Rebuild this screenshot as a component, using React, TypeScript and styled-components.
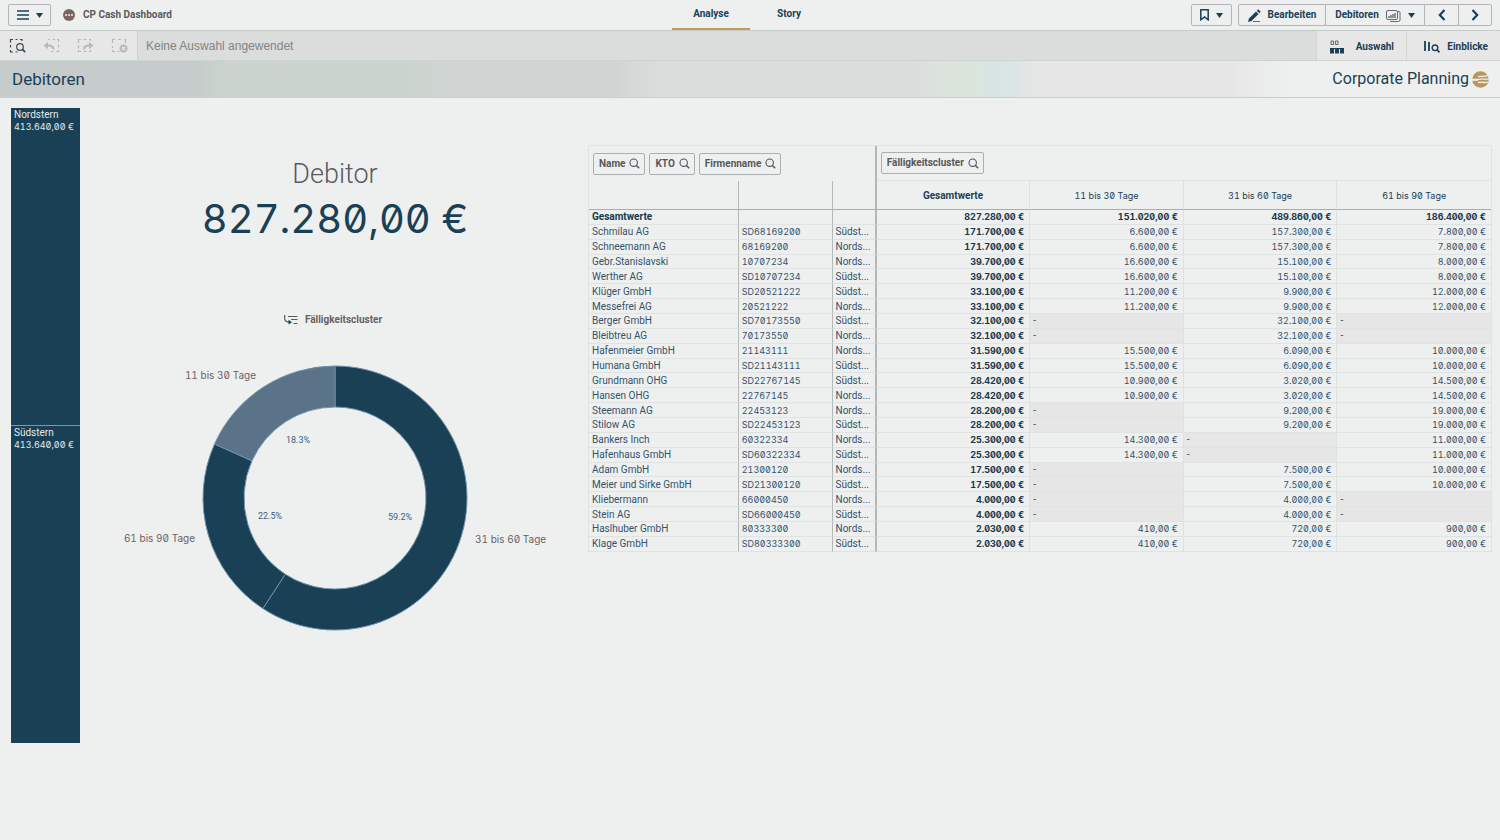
import React from "react";
import styled, { createGlobalStyle, css } from "styled-components";

const navy = "#1a4056";
const sans = `Roboto, "Liberation Sans", sans-serif`;
const figures = `Inter, Roboto, sans-serif`;

const tabular = css`
  font-family: ${figures};
  font-feature-settings: "zero" 1, "tnum" 1;
`;

const Global = createGlobalStyle`
  *, *::before, *::after { box-sizing: border-box; }
  body { margin: 0; background: #eef0ef; color: ${navy}; font-family: ${sans}; font-size: 10px; line-height: 14px; }
  button { font: inherit; color: inherit; background: none; border: 0; padding: 0; cursor: pointer; }
  h1, h2, p { margin: 0; font-weight: 400; }
`;

const Page = styled.div`
  min-height: 100vh;
`;

const TopBar = styled.header`
  display: grid;
  grid-template-columns: 1fr auto 1fr;
  height: 31px;
  padding: 0 8px;
  border-bottom: 1px solid #c3cccb;
`;

const Cluster = styled.div<{ $end?: boolean; $gap: number }>`
  display: flex;
  align-items: center;
  gap: ${(p) => p.$gap}px;
  justify-content: ${(p) => (p.$end ? "flex-end" : "flex-start")};
`;

const BarButton = styled.button<{ $width: number }>`
  display: flex;
  align-items: center;
  justify-content: center;
  gap: 7px;
  width: ${(p) => p.$width}px;
  height: 22px;
  border: 1px solid #b5b3b8;
  border-radius: 2px;
  font-weight: 700;
  white-space: nowrap;
`;

const ButtonGroup = styled.div`
  display: flex;
  ${BarButton} + ${BarButton} { margin-left: -1px; border-radius: 0 2px 2px 0; }
`;

const AppName = styled.div`
  display: flex;
  align-items: center;
  gap: 8px;
  font-weight: 700;
  color: #5b5a5b;
`;

const Tabs = styled.nav`
  display: flex;
`;

const Tab = styled.a<{ $active?: boolean }>`
  display: block;
  width: 78px;
  height: 30px;
  line-height: 28px;
  text-align: center;
  font-weight: 700;
  color: ${navy};
  text-decoration: none;
  border-bottom: 2px solid ${(p) => (p.$active ? "#c39a5b" : "transparent")};
`;

const SelectionBar = styled.div`
  display: flex;
  height: 29px;
  background: #e7e7e7;
`;

const SelectionTools = styled.div`
  display: flex;
  align-items: center;
  gap: 17px;
  width: 137px;
  padding-left: 9px;
`;

const ToolButton = styled.button`
  display: flex;
  color: #3b4a55;
  &:disabled { color: #b9b9b9; }
`;

const SelectionText = styled.p`
  flex: 1;
  padding-left: 8px;
  line-height: 30px;
  font-family: "Liberation Sans", sans-serif;
  font-size: 12px;
  color: #818385;
  background: #dbdddc;
  border-left: 1px solid #cfd2d1;
`;

const PanelButton = styled.button<{ $width: number; $gap: number }>`
  display: flex;
  align-items: center;
  justify-content: flex-end;
  gap: ${(p) => p.$gap}px;
  width: ${(p) => p.$width}px;
  padding: 2px 12px 0 0;
  font-weight: 700;
  border-left: 1px solid #d3d7d6;
`;

const TitleBar = styled.div`
  display: flex;
  align-items: center;
  justify-content: space-between;
  height: 38px;
  padding: 0 11px 0 12px;
  border-top: 1px solid #cdd3d1;
  border-bottom: 1px solid #c9cfce;
  background: linear-gradient(90deg, #c6cbcb 0 13%, #cad4cc 15% 27%, #d0d5d4 30% 41%, #dbdddc 44% 61%, #dce5dc 63% 65%, #d8e5e4 66% 67%, #e6e6e6 69% 82%, #eef0ef 86%);
`;

const SheetTitle = styled.h1`
  font-size: 17px;
  line-height: 24px;
`;

const Brand = styled.div`
  display: flex;
  align-items: center;
  gap: 3px;
  font-size: 16px;
  line-height: 24px;
`;

const Sheet = styled.main`
  display: grid;
  grid-template-columns: 69px minmax(0, 508fr) minmax(0, 904fr);
  align-items: start;
  padding: 10px 8px 0 11px;
`;

const TreeMap = styled.section`
  display: flex;
  flex-direction: column;
  gap: 1px;
  background: #7c98ad;
`;

const TreeCell = styled.div`
  height: 317px;
  padding: 1px 3px;
  background: ${navy};
  color: #e3e9ea;
  line-height: 12px;
`;

const Figure = styled.span`
  ${tabular}
  font-size: 9px;
`;

const Overview = styled.section`
  display: flex;
  flex-direction: column;
  align-items: center;
  padding: 50px 0 0 2px;
`;

const KpiLabel = styled.h2`
  font-size: 27px;
  line-height: 32px;
  font-weight: 300;
  color: #5b5a5e;
`;

const KpiValue = styled.p`
  ${tabular}
  font-size: 40px;
  font-weight: 400;
  line-height: 58px;
  white-space: nowrap;
`;

const Dimension = styled.button`
  display: flex;
  align-items: center;
  gap: 7px;
  margin-top: 65px;
  padding-right: 4px;
  font-weight: 700;
  color: #6b6063;
`;

const Donut = styled.svg`
  display: block;
  width: 440px;
  max-width: 100%;
  margin-top: 23px;
`;

const SliceNames = styled.g`
  ${tabular}
  font-size: 10px;
  fill: #6b5f63;
`;

const Shares = styled.g`
  font-size: 9px;
  fill: #3c6280;
  text-anchor: middle;
`;

const Pivot = styled.table`
  width: 100%;
  height: 407px;
  margin-top: 37px;
  table-layout: fixed;
  border-collapse: separate;
  border-spacing: 0;
  border: 1px solid #dfe4e1;
  border-bottom: 0;
`;

const FilterHead = styled.th<{ $rule?: boolean }>`
  height: 35px;
  padding: 0 4px;
  text-align: left;
  border-right: ${(p) => (p.$rule ? "2px solid #b4b8b9" : "0")};
  border-bottom: ${(p) => (p.$rule ? "0" : "1px solid #dbe2dd")};
`;

const Filters = styled.div`
  display: flex;
  gap: 4px;
`;

const FilterButton = styled.button`
  display: flex;
  align-items: center;
  gap: 4px;
  height: 22px;
  padding: 0 4px 0 5px;
  border: 1px solid #a9b0b1;
  border-radius: 2px;
  font-weight: 700;
  color: #565759;
`;

type Edge = "rule" | "strong" | "soft" | "none";
const edges: Record<Edge, string> = {
  rule: "1px solid #b4b8b9",
  strong: "2px solid #b4b8b9",
  soft: "1px solid #dde1df",
  none: "0",
};

const ColumnHead = styled.th<{ $edge: Edge; $bold?: boolean }>`
  height: 29px;
  padding: 2px 0 0;
  font-weight: ${(p) => (p.$bold ? 700 : 400)};
  border-right: ${(p) => edges[p.$edge]};
  border-bottom: 1px solid #a9adae;
`;

const Cell = styled.td<{ $edge: Edge; $bold?: boolean; $num?: boolean; $empty?: boolean }>`
  padding: 0 ${(p) => (p.$num && !p.$empty ? 5 : 2)}px 0 3px;
  line-height: 13px;
  text-align: ${(p) => (p.$num && !p.$empty ? "right" : "left")};
  font-weight: ${(p) => (p.$bold ? 700 : 400)};
  color: ${(p) => (p.$bold ? "#17374b" : "#34526a")};
  background: ${(p) => (p.$empty ? "#e6e6e6" : "transparent")};
  border-right: ${(p) => edges[p.$edge]};
  border-bottom: 1px solid #dfe3e1;
  overflow: hidden;
  white-space: nowrap;
  text-overflow: ellipsis;
`;

const Caret = () => (
  <svg width="7" height="5" viewBox="0 0 7 5" fill={navy}><path d="M0 0h7L3.500 5z" /></svg>
);

const Lens = () => (
  <svg width="11" height="11" viewBox="0 0 11 11" fill="none" stroke="#4f5356" strokeWidth="1.1">
    <circle cx="4.700" cy="4.700" r="3.700" /><path d="M7.400 7.400l2.800 2.800" strokeWidth="1.400" />
  </svg>
);

const marquee = "M1.500 5V1.500H4M7 1.500h3M13 1.500h1.500V5M1.500 8v2M1.500 12v1.500H4M6.500 13.500h2";

const ToolIcon = ({ kind }: { kind: "search" | "back" | "forward" | "clear" }) => (
  <svg width="17" height="16" viewBox="0 0 17 16" fill="none" stroke="currentColor" strokeWidth="1.2">
    {kind === "search" && <><path d="M1.500 4.500V1.500H4M6.500 1.500h2M11 1.500h2V3M1.500 7v2.500M1.500 12v2H4M6.500 14h2" /><circle cx="11" cy="9" r="3.300" /><path d="M13.400 11.400l2.800 2.800" strokeWidth="1.800" /></>}
    {kind === "back" && <><path d="M5 1.500h2M9.500 1.500h2.500M14 1.500h1.500V4M15.500 6.500v3M15.500 12v1.500H13M10.500 13.500H8" /><path d="M10.500 11.500C10.500 8.500 9 7.500 5 7.500" strokeWidth="2" /><path d="M5 4v7L.5 7.500z" fill="currentColor" stroke="none" /></>}
    {kind === "forward" && <><path d="M1.500 5V1.500H4M6.500 1.500h3M12 1.500h1.500V3M1.500 7.500v3M1.500 12v1.500H4M6.500 13.500h3M12 13.500h1.500V12" /><path d="M7 11.500c0-3 1.500-4 5-4" strokeWidth="2" /><path d="M12 4v7l4.500-3.500z" fill="currentColor" stroke="none" /></>}
    {kind === "clear" && <><path d={marquee} /><circle cx="12.500" cy="10.500" r="4" fill="currentColor" stroke="none" /><path d="M11 9l3 3M14 9l-3 3" stroke="#e7e7e7" /></>}
  </svg>
);

const Arrow = ({ left }: { left?: boolean }) => (
  <svg width="8" height="12" viewBox="0 0 8 12" fill="none" stroke={navy} strokeWidth="2.200">
    <path d={left ? "M6.500 1L1.800 6l4.700 5" : "M1.500 1l4.700 5-4.700 5"} />
  </svg>
);

const SheetIcon = () => (
  <svg width="15" height="13" viewBox="0 0 15 13" fill="none" stroke="#6b6670">
    <rect x=".5" y="1.500" width="11" height="9" rx="1.500" /><path d="M12 2.500h1a1 1 0 011 1v7.500a1.500 1.500 0 01-1.500 1.500H4" />
    <path d="M3 9V7M5 9V6M7 9V5M9 9V4" stroke={navy} />
  </svg>
);

const Emblem = () => (
  <svg width="17" height="17" viewBox="0 0 17 17" aria-hidden="true">
    <circle cx="8.500" cy="8.500" r="8.300" fill="#b8975a" />
    <path d="M6 5.600c3-.8 4 .4 7-.5l4-.8M0 8.300h5c3 0 4-.6 6-.3l6 .2M6 11.500c3-.8 5 .6 10-.3" fill="none" stroke="#eef0ef" strokeWidth="1.300" />
    <path d="M0 9.300h6" stroke="#eef0ef" />
  </svg>
);

const euro = (n: number) => n.toLocaleString("de-DE", { useGrouping: true }) + ",00 €";

type Row = [string, string, string, number, number | null, number | null, number | null];
const S = "Südstern";
const N = "Nordstern";
const rows: Row[] = [
  ["Schmilau AG", "SD68169200", S, 171700, 6600, 157300, 7800],
  ["Schneemann AG", "68169200", N, 171700, 6600, 157300, 7800],
  ["Gebr.Stanislavski", "10707234", N, 39700, 16600, 15100, 8000],
  ["Werther AG", "SD10707234", S, 39700, 16600, 15100, 8000],
  ["Klüger GmbH", "SD20521222", S, 33100, 11200, 9900, 12000],
  ["Messefrei AG", "20521222", N, 33100, 11200, 9900, 12000],
  ["Berger GmbH", "SD70173550", S, 32100, null, 32100, null],
  ["Bleibtreu AG", "70173550", N, 32100, null, 32100, null],
  ["Hafenmeier GmbH", "21143111", N, 31590, 15500, 6090, 10000],
  ["Humana GmbH", "SD21143111", S, 31590, 15500, 6090, 10000],
  ["Grundmann OHG", "SD22767145", S, 28420, 10900, 3020, 14500],
  ["Hansen OHG", "22767145", N, 28420, 10900, 3020, 14500],
  ["Steemann AG", "22453123", N, 28200, null, 9200, 19000],
  ["Stilow AG", "SD22453123", S, 28200, null, 9200, 19000],
  ["Bankers Inch", "60322334", N, 25300, 14300, null, 11000],
  ["Hafenhaus GmbH", "SD60322334", S, 25300, 14300, null, 11000],
  ["Adam GmbH", "21300120", N, 17500, null, 7500, 10000],
  ["Meier und Sirke GmbH", "SD21300120", S, 17500, null, 7500, 10000],
  ["Kliebermann", "66000450", N, 4000, null, 4000, null],
  ["Stein AG", "SD66000450", S, 4000, null, 4000, null],
  ["Haslhuber GmbH", "80333300", N, 2030, 410, 720, 900],
  ["Klage GmbH", "SD80333300", S, 2030, 410, 720, 900],
];

const Amount = ({ value, bold, last }: { value: number | null; bold?: boolean; last?: boolean }) => (
  <Cell $num $edge={last ? "none" : "soft"} $bold={bold} $empty={value === null}>
    {value === null ? "-" : <Figure>{euro(value)}</Figure>}
  </Cell>
);

const NameCol = styled.col`width: 16.6%;`;
const AccountCol = styled.col`width: 10.4%;`;
const FirmCol = styled.col`width: 4.9%;`;

const cx = 220, cy = 148, R = 132, r = 91;
const point = (share: number, radius: number) => {
  const a = share * 2 * Math.PI;
  return `${cx + radius * Math.sin(a)} ${cy - radius * Math.cos(a)}`;
};
const slice = (from: number, to: number) => {
  const large = to - from > 0.5 ? 1 : 0;
  return `M${point(from, R)}A${R} ${R} 0 ${large} 1 ${point(to, R)}L${point(to, r)}A${r} ${r} 0 ${large} 0 ${point(from, r)}Z`;
};

const App = () => (
  <Page>
    <Global />
    <TopBar>
      <Cluster $gap={12}>
        <BarButton $width={43} aria-label="Navigation">
          <svg width="12" height="10" viewBox="0 0 12 10" stroke={navy} strokeWidth="1.600"><path d="M0 1h12M0 5h12M0 9h12" /></svg>
          <Caret />
        </BarButton>
        <AppName>
          <svg width="12" height="12" viewBox="0 0 12 12"><circle cx="6" cy="6" r="6" fill="#7d6463" /><path d="M2 6h2M5 6h2M8 6h2" stroke="#eef0ef" strokeWidth="1.600" /></svg>
          CP Cash Dashboard
        </AppName>
      </Cluster>
      <Tabs>
        <Tab href="#analyse" $active>Analyse</Tab>
        <Tab href="#story">Story</Tab>
      </Tabs>
      <Cluster $gap={6} $end>
        <BarButton $width={41} aria-label="Lesezeichen">
          <svg width="9" height="12" viewBox="0 0 9 12" fill="none" stroke={navy} strokeWidth="1.500"><path d="M.8.800h7.400v10L4.500 8 .8 10.800z" /></svg>
          <Caret />
        </BarButton>
        <ButtonGroup>
          <BarButton $width={88}>
            <svg width="13" height="13" viewBox="0 0 13 13"><path d="M1 9.500L8 2.500l2.500 2.500-7 7L0 13z" fill={navy} /><path d="M8.800 1.700L10.200.3l2.500 2.500-1.400 1.400z" fill={navy} /><path d="M5 12.500h7" stroke="#6b6670" /></svg>
            Bearbeiten
          </BarButton>
          <BarButton $width={100}>Debitoren <SheetIcon /> <Caret /></BarButton>
          <BarButton $width={35} aria-label="Zurück"><Arrow left /></BarButton>
          <BarButton $width={34} aria-label="Weiter"><Arrow /></BarButton>
        </ButtonGroup>
      </Cluster>
    </TopBar>

    <SelectionBar>
      <SelectionTools>
        <ToolButton aria-label="Suchen"><ToolIcon kind="search" /></ToolButton>
        <ToolButton aria-label="Schritt zurück" disabled><ToolIcon kind="back" /></ToolButton>
        <ToolButton aria-label="Schritt vor" disabled><ToolIcon kind="forward" /></ToolButton>
        <ToolButton aria-label="Auswahl löschen" disabled><ToolIcon kind="clear" /></ToolButton>
      </SelectionTools>
      <SelectionText>Keine Auswahl angewendet</SelectionText>
      <PanelButton $width={90} $gap={12}>
        <svg width="14" height="14" viewBox="0 0 14 14"><path d="M1 1h2.500v3.500H1zM5.500 1H8v3.500H5.500z" fill="none" stroke="#6b6670" /><path d="M0 8.500h14" stroke={navy} /><path d="M0 9h4v4.500H0zM5 9h4v4.500H5zM10 9h4v4.500h-4z" fill={navy} /></svg>
        Auswahl
      </PanelButton>
      <PanelButton $width={94} $gap={7}>
        <svg width="16" height="13" viewBox="0 0 16 13" fill="none" stroke={navy} strokeWidth="1.800"><path d="M1 1v10M5 2v9" /><circle cx="11" cy="7.800" r="2.800" strokeWidth="1.400" /><path d="M13 9.800l2.500 2.500" /></svg>
        Einblicke
      </PanelButton>
    </SelectionBar>

    <TitleBar>
      <SheetTitle>Debitoren</SheetTitle>
      <Brand>Corporate Planning <Emblem /></Brand>
    </TitleBar>

    <Sheet>
      <TreeMap>
        {[N, S].map((name) => (
          <TreeCell key={name}>{name}<br /><Figure>{euro(413640)}</Figure></TreeCell>
        ))}
      </TreeMap>

      <Overview>
        <KpiLabel>Debitor</KpiLabel>
        <KpiValue>827.280,00 €</KpiValue>
        <Dimension>
          <svg width="14" height="10" viewBox="0 0 14 10" fill="none" stroke="#5b5a5e" strokeWidth="1.200"><path d="M.7 0v4q0 3 5 3M4 1.500h9.500M7 4.500h6.500M9.500 8.500h4" /><path d="M4.500 4.800L8 7.200 4.500 9.600z" fill={navy} stroke="none" /></svg>
          Fälligkeitscluster
        </Dimension>
        <Donut viewBox="0 0 440 290" role="img" aria-label="Fälligkeitscluster">
          <g stroke="#6f90a8" strokeWidth="1">
            <path d={slice(0, 0.592)} fill={navy} />
            <path d={slice(0.592, 0.817)} fill={navy} />
            <path d={slice(0.817, 1)} fill="#5a7389" />
          </g>
          <SliceNames>
            <text x="141" y="29" textAnchor="end">11 bis 30 Tage</text>
            <text x="80" y="192" textAnchor="end">61 bis 90 Tage</text>
            <text x="360" y="193">31 bis 60 Tage</text>
          </SliceNames>
          <Shares>
            <text x="183" y="93">18.3%</text>
            <text x="155" y="169">22.5%</text>
            <text x="285" y="170">59.2%</text>
          </Shares>
        </Donut>
      </Overview>

      <Pivot>
        <colgroup>
          <NameCol /><AccountCol /><FirmCol /><col /><col /><col /><col />
        </colgroup>
        <thead>
          <tr>
            <FilterHead colSpan={3} $rule>
              <Filters>
                {["Name", "KTO", "Firmenname"].map((f) => <FilterButton key={f}>{f} <Lens /></FilterButton>)}
              </Filters>
            </FilterHead>
            <FilterHead colSpan={4}>
              <Filters><FilterButton>Fälligkeitscluster <Lens /></FilterButton></Filters>
            </FilterHead>
          </tr>
          <tr>
            <ColumnHead $edge="rule" /><ColumnHead $edge="rule" /><ColumnHead $edge="strong" />
            <ColumnHead $edge="soft" $bold>Gesamtwerte</ColumnHead>
            <ColumnHead $edge="soft"><Figure>11 bis 30 Tage</Figure></ColumnHead>
            <ColumnHead $edge="soft"><Figure>31 bis 60 Tage</Figure></ColumnHead>
            <ColumnHead $edge="none"><Figure>61 bis 90 Tage</Figure></ColumnHead>
          </tr>
        </thead>
        <tbody>
          <tr>
            <Cell $edge="rule" $bold>Gesamtwerte</Cell><Cell $edge="rule" /><Cell $edge="strong" />
            <Amount value={827280} bold /><Amount value={151020} bold /><Amount value={489860} bold /><Amount value={186400} bold last />
          </tr>
          {rows.map(([name, konto, firm, total, a, b, c]) => (
            <tr key={konto}>
              <Cell $edge="rule">{name}</Cell>
              <Cell $edge="rule"><Figure>{konto}</Figure></Cell>
              <Cell $edge="strong">{firm.slice(0, 5)}...</Cell>
              <Amount value={total} bold /><Amount value={a} /><Amount value={b} /><Amount value={c} last />
            </tr>
          ))}
        </tbody>
      </Pivot>
    </Sheet>
  </Page>
);

export default App;
